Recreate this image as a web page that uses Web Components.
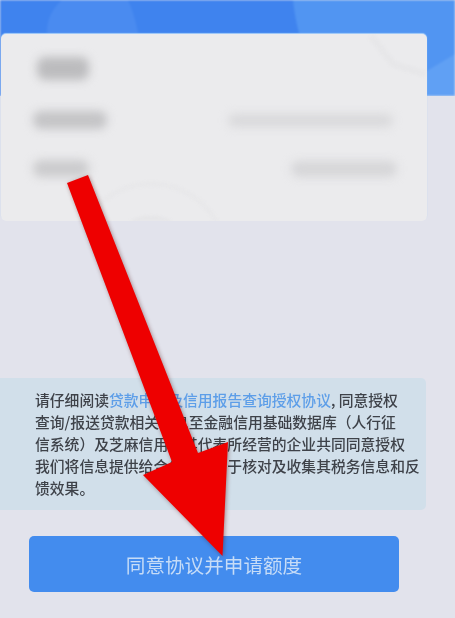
<!DOCTYPE html>
<html lang="zh"><head><meta charset="utf-8">
<style>
html,body{margin:0;padding:0;background:#e2e3ec}
body{width:455px;height:618px;overflow:hidden;font-family:"Noto Sans CJK SC","Liberation Sans",sans-serif}
</style></head><body>
<apply-page>
  <hero-band slot="band"></hero-band>
  <blur-card></blur-card>
  <notice-box>请仔细阅读<a>贷款申请及信用报告查询授权协议</a>, 同意授权<br>查询/报送贷款相关信息至金融信用基础数据库（人行征<br>信系统）及芝麻信用及其代表所经营的企业共同同意授权<br>我们将信息提供给合作机构用于核对及收集其税务信息和反<br>馈效果。</notice-box>
  <apply-button>同意协议并申请额度</apply-button>
  <red-arrow slot="over"></red-arrow>
</apply-page>
<script>
function def(name,html){customElements.define(name,class extends HTMLElement{constructor(){super();this.attachShadow({mode:"open"}).innerHTML=html}})}
def("apply-page",`<style>
:host{display:flex;flex-direction:column;position:relative;width:455px;height:618px;padding-top:34px;box-sizing:border-box;background:#e2e3ec;overflow:hidden}
</style><slot name="band"></slot><slot></slot><slot name="over"></slot>`);
def("hero-band",`<style>
:host{display:block;position:absolute;left:0;top:0;width:100%;height:96px;overflow:hidden}
svg{display:block;filter:blur(1px)}
</style><svg width="455" height="96" viewBox="0 0 455 96">
<rect width="455" height="98" fill="#3f83ee"/>
<path d="M62 0C46 14 44 32 50 50L60 98H150C142 62 140 26 128 0Z" fill="#4a8bf0"/>
<path d="M293 0C296 30 306 66 330 98H455V0Z" fill="#5195f2"/>
<path d="M425 72L455 54V98H425Z" fill="#60a0f4"/>
</svg>`);
def("blur-card",`<style>
:host{display:block;position:relative;z-index:1;flex:none;width:426px;height:187px;margin-left:1px;box-sizing:border-box;padding:23px 30px 0 32px;background:#ebebed;border-radius:5px;box-shadow:0 -1px 1px #a9cff8;overflow:hidden}
.b{position:relative;background:#bdbdbf;border-radius:8px;filter:blur(5px)}
.t{width:52px;height:23px;margin-left:4px;background:#bcbcbe}
.row{position:relative;display:flex;justify-content:space-between;align-items:center}
.r1{margin-top:31px}.r2{margin-top:31px}
.l1{width:74px;height:18px;background:#c4c4c6}.l2{width:56px;height:17px;background:#cbcbcd}
.v1{width:165px;height:13px;margin-right:4px;background:#d9d9db}.v2{width:106px;height:16px;background:#d6d6d8}
svg{position:absolute;left:0;top:0;filter:blur(1px)}
</style>
<svg width="426" height="187" viewBox="0 0 426 187" fill="none" stroke="#e6e6e8">
<circle cx="150" cy="226" r="40" stroke-width="9"/><circle cx="150" cy="226" r="76" stroke-width="5" stroke="#e8e8ea"/>
<path d="M370 2L392 30L424 40" stroke-width="7" stroke="#e7e7e9"/></svg>
<div class="b t"></div>
<div class="row r1"><div class="b l1"></div><div class="b v1"></div></div>
<div class="row r2"><div class="b l2"></div><div class="b v2"></div></div>`);
def("notice-box",`<style>
:host{display:block;flex:none;width:426px;height:132px;margin-top:157px;box-sizing:border-box;padding:11px 0 0 35px;background:#d1dfea;border-radius:0 5px 5px 0;font-size:14.8px;font-weight:500;line-height:22px;color:#3e4249;white-space:nowrap;filter:blur(.5px)}
::slotted(a){color:#5d9ee8}
</style><slot></slot>`);
def("apply-button",`<style>
:host{display:flex;flex:none;align-items:center;justify-content:center;width:370px;height:56px;margin:26px 0 0 29px;border-radius:5px;background:#438cee;color:#c6dcf7;font-size:19.6px;filter:blur(.5px)}
</style><slot></slot>`);
def("red-arrow",`<style>
:host{display:block;position:absolute;left:0;top:0;z-index:2;pointer-events:none}
svg{display:block;filter:blur(.4px) drop-shadow(1px 1px 2px rgba(70,0,0,.4))}
</style><svg width="455" height="618" viewBox="0 0 455 618">
<path d="M67 183L88 175L198 453L228 442L222.5 556L143 475L172 462Z" fill="#ee0000"/></svg>`);
</script>
</body></html>
